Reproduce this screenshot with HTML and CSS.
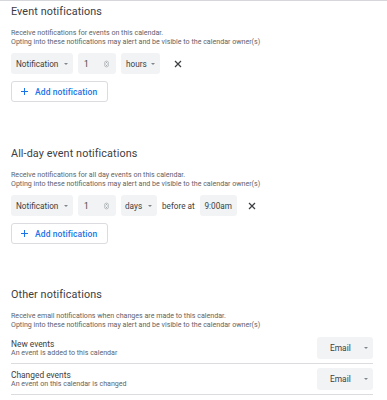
FILE: index.html
```html
<!DOCTYPE html>
<html>
<head>
<meta charset="utf-8">
<link rel="stylesheet" href="styles.css">
</head>
<body>
<div class="page">
  <section class="sec sec-first">
    <h2 class="title">Event notifications</h2>
    <p class="desc">Receive notifications for events on this calendar.<br>Opting into these notifications may alert and be visible to the calendar owner(s)</p>
    <div class="row">
      <div class="sel sel-type"><span>Notification</span><span class="arrow"></span></div>
      <div class="sel sel-num"><span>1</span><svg class="spin" viewBox="0 0 6 8" width="5" height="8"><rect x="0.5" y="0.5" width="5" height="7" rx="2.5" fill="none" stroke="#9aa0a6" stroke-width="0.7"/><path d="M2 3.2 L3 2.2 L4 3.2 M2 4.8 L3 5.8 L4 4.8" fill="none" stroke="#5f6368" stroke-width="0.7"/></svg></div>
      <div class="sel sel-unit"><span>hours</span><span class="arrow"></span></div>
      <svg class="close" viewBox="0 0 8 8" width="8" height="8"><path d="M1 1 L7 7 M7 1 L1 7" stroke="#3c4043" stroke-width="1.25"/></svg>
    </div>
    <button class="add"><svg class="plus" viewBox="0 0 7 7" width="7" height="7"><path d="M3.5 0 V7 M0 3.5 H7" stroke="#1a73e8" stroke-width="1"/></svg><span>Add notification</span></button>
  </section>

  <section class="sec sec-second">
    <h2 class="title">All-day event notifications</h2>
    <p class="desc">Receive notifications for all day events on this calendar.<br>Opting into these notifications may alert and be visible to the calendar owner(s)</p>
    <div class="row">
      <div class="sel sel-type"><span>Notification</span><span class="arrow"></span></div>
      <div class="sel sel-num"><span>1</span><svg class="spin" viewBox="0 0 6 8" width="5" height="8"><rect x="0.5" y="0.5" width="5" height="7" rx="2.5" fill="none" stroke="#9aa0a6" stroke-width="0.7"/><path d="M2 3.2 L3 2.2 L4 3.2 M2 4.8 L3 5.8 L4 4.8" fill="none" stroke="#5f6368" stroke-width="0.7"/></svg></div>
      <div class="sel sel-unit sel-days"><span>days</span><span class="arrow"></span></div>
      <span class="before">before at</span>
      <div class="sel sel-time"><span>9:00am</span></div>
      <svg class="close close-2" viewBox="0 0 8 8" width="8" height="8"><path d="M1 1 L7 7 M7 1 L1 7" stroke="#3c4043" stroke-width="1.25"/></svg>
    </div>
    <button class="add"><svg class="plus" viewBox="0 0 7 7" width="7" height="7"><path d="M3.5 0 V7 M0 3.5 H7" stroke="#1a73e8" stroke-width="1"/></svg><span>Add notification</span></button>
  </section>

  <section class="sec sec-third">
    <h2 class="title">Other notifications</h2>
    <p class="desc">Receive email notifications when changes are made to this calendar.<br>Opting into these notifications may alert and be visible to the calendar owner(s)</p>
    <div class="list">
      <div class="item">
        <div class="item-text">
          <div class="item-title">New events</div>
          <div class="item-sub">An event is added to this calendar</div>
        </div>
        <div class="sel sel-email"><span>Email</span><span class="arrow"></span></div>
      </div>
      <div class="item">
        <div class="item-text">
          <div class="item-title">Changed events</div>
          <div class="item-sub">An event on this calendar is changed</div>
        </div>
        <div class="sel sel-email"><span>Email</span><span class="arrow"></span></div>
      </div>
    </div>
  </section>
</div>
</body>
</html>
```

FILE: styles.css
```css
html, body {
  margin: 0;
  padding: 0;
  background: #ffffff;
}
body {
  font-family: Roboto, "Liberation Sans", Arial, sans-serif;
  color: #3c4043;
}
.page {
  border-top: 1px solid #d5d7da;
  padding: 0 14px 0 11px;
}
.sec {
  margin: 0;
}
.sec-first { padding-top: 4px; }
.sec-second { margin-top: 45px; }
.sec-third { margin-top: 44px; }
.title {
  margin: 0;
  font-size: 10.8px;
  line-height: 14px;
  font-weight: 400;
  color: #3c4043;
  letter-spacing: 0.1px;
}
.desc {
  margin: 9px 0 0;
  font-size: 7.1px;
  line-height: 9px;
  color: #5f6368;
}
.row {
  display: flex;
  align-items: center;
  gap: 5px;
  margin-top: 7px;
  height: 21px;
}
.sel {
  display: flex;
  align-items: center;
  justify-content: space-between;
  background: #f1f3f4;
  border-radius: 3px;
  height: 21px;
  box-sizing: border-box;
  font-size: 8.2px;
  color: #3c4043;
}
.arrow {
  width: 0;
  height: 0;
  border-left: 2px solid transparent;
  border-right: 2px solid transparent;
  border-top: 2px solid #80868b;
}
.sel-type { width: 62px; padding: 0 5px 0 5px; }
.sel-num { width: 38px; padding: 0 7px 0 6px; }
.sel-unit { width: 39px; padding: 0 5px 0 5px; }
.sel-days { width: 36px; padding-left: 4px; }
.sel-time { width: 37px; padding: 0 2px; justify-content: center; }
.spin { display: block; }
.before {
  font-size: 8.2px;
  color: #3c4043;
}
.close {
  display: block;
  margin-left: 9px;
}
.close-2 { margin-left: 6px; }
.add {
  display: flex;
  align-items: center;
  margin-top: 7px;
  width: 97px;
  height: 21px;
  padding: 0 0 0 9px;
  box-sizing: border-box;
  background: #fff;
  border: 1px solid #dadce0;
  border-radius: 3px;
  font-family: Roboto, "Liberation Sans", Arial, sans-serif;
  font-size: 8.5px;
  font-weight: 500;
  color: #1a73e8;
  letter-spacing: 0.1px;
}
.plus { display: block; margin-right: 7px; }
.list {
  margin-top: 4px;
}
.item {
  display: flex;
  align-items: center;
  justify-content: space-between;
  padding: 4px 0;
  box-sizing: content-box;
  height: 22px;
  border-bottom: 1px solid #dadce0;
}
.item-title {
  font-size: 8.4px;
  line-height: 10px;
  color: #3c4043;
}
.item-sub {
  font-size: 7.1px;
  line-height: 8px;
  color: #5f6368;
}
.sel-email {
  width: 56px;
  height: 22px;
  padding: 0 5px 0 13px;
  font-size: 8.4px;
}
```
